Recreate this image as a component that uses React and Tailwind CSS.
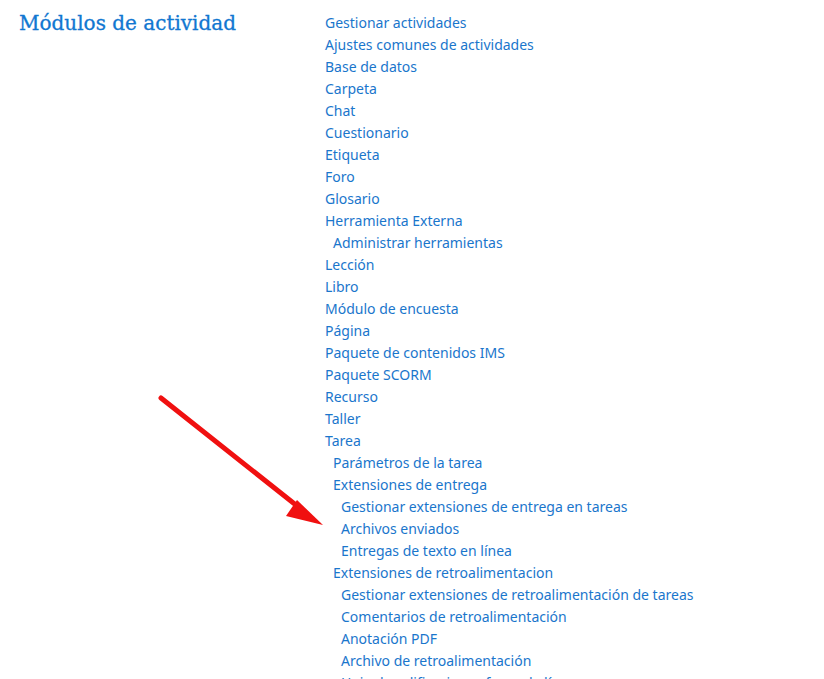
import React from "react"

const items = [
  ["Gestionar actividades", 0],
  ["Ajustes comunes de actividades", 0],
  ["Base de datos", 0],
  ["Carpeta", 0],
  ["Chat", 0],
  ["Cuestionario", 0],
  ["Etiqueta", 0],
  ["Foro", 0],
  ["Glosario", 0],
  ["Herramienta Externa", 0],
  ["Administrar herramientas", 1],
  ["Lección", 0],
  ["Libro", 0],
  ["Módulo de encuesta", 0],
  ["Página", 0],
  ["Paquete de contenidos IMS", 0],
  ["Paquete SCORM", 0],
  ["Recurso", 0],
  ["Taller", 0],
  ["Tarea", 0],
  ["Parámetros de la tarea", 1],
  ["Extensiones de entrega", 1],
  ["Gestionar extensiones de entrega en tareas", 2],
  ["Archivos enviados", 2],
  ["Entregas de texto en línea", 2],
  ["Extensiones de retroalimentacion", 1],
  ["Gestionar extensiones de retroalimentación de tareas", 2],
  ["Comentarios de retroalimentación", 2],
  ["Anotación PDF", 2],
  ["Archivo de retroalimentación", 2],
  ["Hoja de calificaciones fuera de línea", 2],
]

const indent = ["pl-0", "pl-2", "pl-4"]

export default function App() {
  return (
    <div className="relative h-[679px] w-[824px] overflow-hidden bg-white">
      <div className="flex pt-[9px]">
        <div className="w-[325px] shrink-0 pl-[19px]">
          <h2 className="text-[20px] leading-[28px] text-[#1177d1] font-['DejaVu_Serif',serif] [-webkit-text-stroke:0.3px_#1177d1]">
            Módulos de actividad
          </h2>
        </div>
        <ul className="pt-[3px] text-[14px] leading-[22px] text-[#1a76cc] font-['Noto_Sans',sans-serif]">
          {items.map(([label, level], i) => (
            <li key={i} className={`${indent[level]} whitespace-nowrap`}>
              <a href="#" className="hover:underline">{label}</a>
            </li>
          ))}
        </ul>
      </div>

      {/* red arrow annotation */}
      <svg className="absolute left-0 top-0 pointer-events-none" width="824" height="679">
        <line x1="161" y1="398" x2="306" y2="513" stroke="#f01010" strokeWidth="5" strokeLinecap="round" />
        <polygon points="323,525 297,500 286,516" fill="#f01010" />
      </svg>
    </div>
  )
}
